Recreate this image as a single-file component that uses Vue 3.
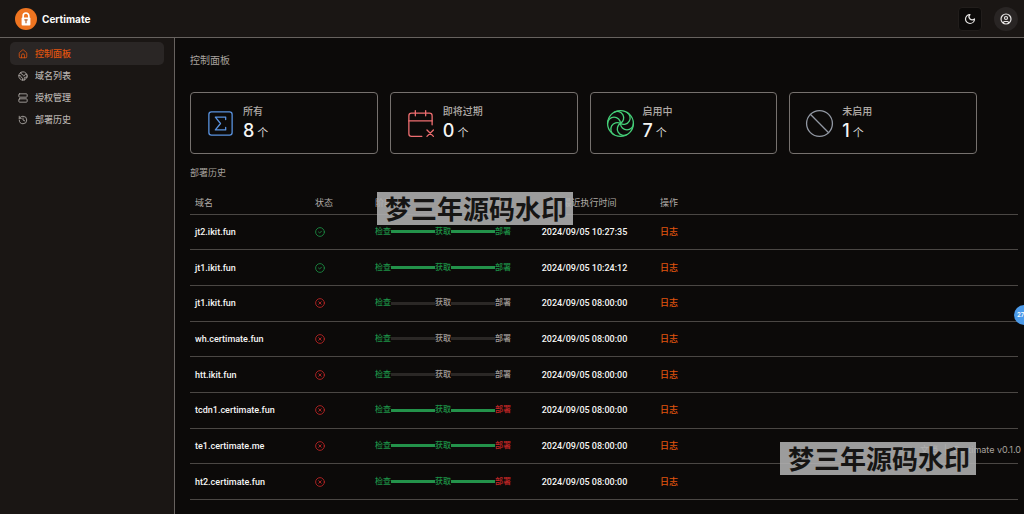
<script setup>
const nav = [
  { label: '控制面板', icon: 'home', active: true },
  { label: '域名列表', icon: 'earth' },
  { label: '授权管理', icon: 'server' },
  { label: '部署历史', icon: 'history' },
]
const cards = [
  { label: '所有', value: 8, icon: 'sigma' },
  { label: '即将过期', value: 0, icon: 'calendar' },
  { label: '启用中', value: 7, icon: 'wheel' },
  { label: '未启用', value: 1, icon: 'ban' },
]
const rows = [
  { domain: 'jt2.ikit.fun', ok: true, steps: ['g', 'g', 'g'], time: '2024/09/05 10:27:35' },
  { domain: 'jt1.ikit.fun', ok: true, steps: ['g', 'g', 'g'], time: '2024/09/05 10:24:12' },
  { domain: 'jt1.ikit.fun', ok: false, steps: ['g', 'n', 'n'], time: '2024/09/05 08:00:00' },
  { domain: 'wh.certimate.fun', ok: false, steps: ['g', 'n', 'n'], time: '2024/09/05 08:00:00' },
  { domain: 'htt.ikit.fun', ok: false, steps: ['g', 'n', 'n'], time: '2024/09/05 08:00:00' },
  { domain: 'tcdn1.certimate.fun', ok: false, steps: ['g', 'g', 'r'], time: '2024/09/05 08:00:00' },
  { domain: 'te1.certimate.me', ok: false, steps: ['g', 'g', 'r'], time: '2024/09/05 08:00:00' },
  { domain: 'ht2.certimate.fun', ok: false, steps: ['g', 'g', 'r'], time: '2024/09/05 08:00:00' },
]
</script>

<template>
  <div class="app">
    <header class="topbar">
      <a class="brand" href="#">
        <svg class="logo" viewBox="0 0 24 24" aria-hidden="true">
          <circle cx="12" cy="12" r="12" fill="#ee7420" />
          <path d="M8.900 11V8.600a3.100 3.100 0 0 1 6.200 0V11" fill="none" stroke="#fff" stroke-width="1.8" />
          <rect x="7.200" y="10.400" width="9.600" height="8.600" rx="1" fill="#fff" />
          <path d="M10.200 13h3.600M12 13v3.600" stroke="#b8622a" stroke-width="1.3" />
        </svg>
        <span>Certimate</span>
      </a>
      <div class="actions">
        <button class="theme" type="button" aria-label="切换主题">
          <svg viewBox="0 0 24 24" class="line bold"><path d="M12 3a6 6 0 0 0 9 9 9 9 0 1 1-9-9Z" /></svg>
        </button>
        <button class="user" type="button" aria-label="账户">
          <svg viewBox="0 0 24 24" class="line bold">
            <circle cx="12" cy="12" r="10" /><circle cx="12" cy="10" r="3" />
            <path d="M7 20.662V19a2 2 0 0 1 2-2h6a2 2 0 0 1 2 2v1.662" />
          </svg>
        </button>
      </div>
    </header>

    <div class="body">
      <nav class="sidebar">
        <a v-for="n in nav" :key="n.label" href="#" class="nav-item" :class="{ active: n.active }">
          <svg viewBox="0 0 24 24" class="line" aria-hidden="true">
            <template v-if="n.icon === 'home'">
              <path d="M3 10a2 2 0 0 1 .7-1.500l7-6a2 2 0 0 1 2.600 0l7 6A2 2 0 0 1 21 10v9a2 2 0 0 1-2 2H5a2 2 0 0 1-2-2z" />
              <path d="M8.500 21v-6a3.500 3.500 0 0 1 7 0v6" />
            </template>
            <template v-else-if="n.icon === 'earth'">
              <path d="M21.540 15H17a2 2 0 0 0-2 2v4.540" />
              <path d="M7 3.340V5a3 3 0 0 0 3 3 2 2 0 0 1 2 2c0 1.100.9 2 2 2a2 2 0 0 0 2-2c0-1.100.9-2 2-2h3.170" />
              <path d="M11 21.950V18a2 2 0 0 0-2-2 2 2 0 0 1-2-2v-1a2 2 0 0 0-2-2H2.050" />
              <circle cx="12" cy="12" r="10" />
            </template>
            <template v-else-if="n.icon === 'server'">
              <rect x="2" y="2" width="20" height="8" rx="2" /><rect x="2" y="14" width="20" height="8" rx="2" />
            </template>
            <template v-else>
              <path d="M3 12a9 9 0 1 0 9-9 9.750 9.750 0 0 0-6.740 2.740L3 8" /><path d="M3 3v5h5M12 7v5l4 2" />
            </template>
          </svg>
          <span>{{ n.label }}</span>
        </a>
      </nav>

      <main class="main">
        <h1>控制面板</h1>
        <section class="cards">
          <article v-for="c in cards" :key="c.label" class="card">
            <svg viewBox="0 0 24 24" class="line thin" :class="c.icon" aria-hidden="true">
              <template v-if="c.icon === 'sigma'">
                <rect x="3" y="3" width="18" height="18" rx="2" />
                <path d="M16 8.900V7H8l4 5-4 5h8v-1.900" />
              </template>
              <template v-else-if="c.icon === 'calendar'">
                <path d="M8 2v4M16 2v4M3 10h18" />
                <path d="M21 13V6a2 2 0 0 0-2-2H5a2 2 0 0 0-2 2v14a2 2 0 0 0 2 2h8" />
                <path d="M17 22l5-5M17 17l5 5" />
              </template>
              <template v-else-if="c.icon === 'wheel'">
                <path d="M22 12a1 1 0 0 1-10 0 1 1 0 0 0-10 0" />
                <path d="M7 20.700a1 1 0 1 1 5-8.700 1 1 0 1 0 5-8.600" />
                <path d="M7 3.300a1 1 0 1 1 5 8.600 1 1 0 1 0 5 8.600" />
                <circle cx="12" cy="12" r="10" />
              </template>
              <template v-else>
                <circle cx="12" cy="12" r="10" /><path d="M4.900 4.900l14.200 14.200" />
              </template>
            </svg>
            <div class="card-text">
              <div class="card-label">{{ c.label }}</div>
              <div class="card-value"><strong>{{ c.value }}</strong><span>个</span></div>
            </div>
          </article>
        </section>

        <h2>部署历史</h2>
        <table>
          <colgroup><col class="c-domain"><col class="c-state"><col class="c-stage"><col class="c-time"><col></colgroup>
          <thead>
            <tr><th>域名</th><th>状态</th><th>阶段</th><th class="time">最近执行时间</th><th>操作</th></tr>
          </thead>
          <tbody>
            <tr v-for="r in rows" :key="r.domain + r.time">
              <td>{{ r.domain }}</td>
              <td>
                <svg viewBox="0 0 24 24" class="line state" :class="r.ok ? 'g' : 'r'" role="img" :aria-label="r.ok ? '成功' : '失败'">
                  <circle cx="12" cy="12" r="10.500" />
                  <path v-if="r.ok" d="M8.500 12l2.500 2.500 4.500-4.500" />
                  <path v-else d="M9 9l6 6M15 9l-6 6" />
                </svg>
              </td>
              <td>
                <div class="steps">
                  <span :class="r.steps[0]">检查</span>
                  <i :class="r.steps[1]"></i>
                  <span :class="r.steps[1]">获取</span>
                  <i :class="r.steps[1]"></i>
                  <span :class="r.steps[2]">部署</span>
                </div>
              </td>
              <td class="time">{{ r.time }}</td>
              <td><a href="#" class="log">日志</a></td>
            </tr>
          </tbody>
        </table>
      </main>
    </div>

    <footer class="version">
      <a href="#">文档</a><span class="bar">|</span><a href="#">Certimate v0.1.0</a>
    </footer>
    <div class="mark mark-top">梦三年源码水印</div>
    <div class="mark mark-bottom">梦三年源码水印</div>
    <div class="bubble">27</div>
  </div>
</template>

<style>
body { background: #0c0a09; }
</style>

<style scoped>
.app {
  position: relative;
  display: flex;
  flex-direction: column;
  height: 100vh;
  overflow: hidden;
  background: #0c0a09;
  color: #f5f5f4;
  font: 500 9px/14px Inter, "Noto Sans CJK SC", sans-serif;
}
* { box-sizing: border-box; }
a { color: inherit; text-decoration: none; }
.line {
  fill: none;
  stroke: currentColor;
  stroke-width: 2;
  stroke-linecap: round;
  stroke-linejoin: round;
}
.line.bold { stroke-width: 2.4; }
.line.thin { stroke-width: 1; }
.topbar {
  display: flex;
  align-items: center;
  justify-content: space-between;
  height: 38px;
  flex: none;
  padding: 0 6px 0 15px;
  background: #1a1614;
  border-bottom: 1px solid #67625f;
}
.brand { display: flex; align-items: center; gap: 5px; font-size: 10px; font-weight: 700; color: #fafaf9; }
.logo { width: 22px; height: 22px; }
.actions { display: flex; align-items: center; gap: 12px; }
button { display: grid; place-items: center; width: 24px; height: 24px; padding: 0; border: 0; color: #e7e5e4; }
button svg { width: 12px; height: 12px; }
.theme { border: 1px solid #211d1b; border-radius: 4px; background: #0c0a09; }
.user { border-radius: 50%; background: #292524; }
.body { display: flex; flex: 1; min-height: 0; }
.sidebar {
  display: flex;
  flex-direction: column;
  width: 175px;
  flex: none;
  padding: 4px 10px;
  background: #1a1614;
  border-right: 1px solid #67625f;
}
.nav-item {
  display: flex;
  align-items: center;
  gap: 7px;
  height: 22px;
  padding: 0 8px;
  border-radius: 5px;
  color: #b5b0ac;
}
.nav-item.active { height: 23px; background: #2a2625; color: #e0540e; }
.nav-item svg { width: 10px; height: 10px; }
.main { flex: 1; min-width: 0; padding: 15px 6px 0 15px; }
h1, h2 { margin: 0; font-weight: 400; color: #a8a29e; }
h1 { font-size: 10px; line-height: 15px; }
h2 { margin-top: 12px; font-size: 9px; line-height: 14px; }
.cards { display: grid; grid-template-columns: repeat(4, 1fr); gap: 12px; margin: 24px 41px 0 0; }
.card {
  display: flex;
  align-items: center;
  gap: 7px;
  height: 62px;
  padding: 0 14px;
  border: 1px solid #76716e;
  border-radius: 4px;
}
.card svg { width: 31px; height: 31px; flex: none; }
.sigma { color: #5a93df; }
.calendar { color: #ee6e70; }
.wheel { color: #45cf78; }
.ban { color: #9298a3; }
.card-text { padding-top: 3px; }
.card-label { font-size: 10px; line-height: 15px; color: #b0aba7; }
.card-value { display: flex; align-items: baseline; gap: 3px; line-height: 24px; }
.card-value strong { font-size: 18px; font-weight: 500; }
.card-value span { font-size: 11px; font-weight: 400; color: #d6d3d1; }
table { width: 100%; height: 320px; table-layout: fixed; border-collapse: collapse; }
thead { height: 34px; }
.c-domain { width: 120px; }
.c-state { width: 60px; }
.c-stage { width: 154px; }
.c-time { width: 131px; }
th, td { padding: 0 5px; text-align: left; vertical-align: middle; border-bottom: 1px solid #4b4744; white-space: nowrap; }
th { height: 34px; padding-top: 12px; font-weight: 400; color: #b0aba7; }
td { font-family: Roboto, "Noto Sans CJK SC", sans-serif; }
th.time { text-align: center; }
td.time { padding-right: 15px; text-align: center; }
.state { display: block; width: 10px; height: 10px; }
.steps { display: flex; align-items: center; font-size: 8px; }
.steps i { width: 44px; height: 3px; background: #2b2826; }
.steps i.g { background: #23924a; }
.g { color: #1d9146; }
.r { color: #c42626; }
.n { color: #a19c98; }
.log { color: #e0540e; }
.version { position: absolute; right: 3px; bottom: 57px; display: flex; gap: 6px; color: #a8a29e; font-weight: 400; }
.mark {
  position: absolute;
  padding: 2px 6px 0 8px;
  background: rgba(176, 176, 176, .88);
  color: #161514;
  font-size: 26px;
  font-weight: 700;
  line-height: 31px;
}
.mark-top { top: 192px; left: 377px; }
.mark-bottom { right: 48px; bottom: 39px; }
.bubble {
  position: absolute;
  right: -10px;
  top: 305px;
  width: 20px;
  height: 20px;
  padding-left: 3px;
  border-radius: 50%;
  background: #4c9bea;
  color: #fff;
  font-size: 6px;
  font-weight: 600;
  line-height: 20px;
}
</style>
